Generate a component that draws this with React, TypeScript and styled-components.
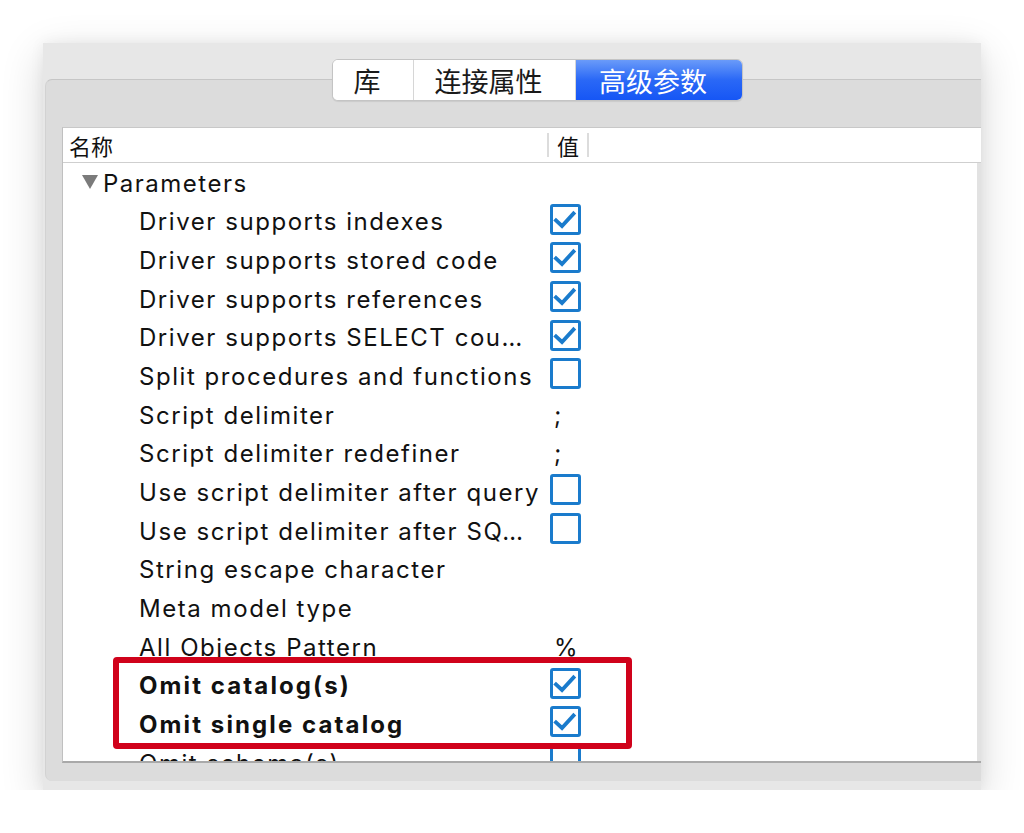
import React from "react";
import styled, { createGlobalStyle } from "styled-components";

type Param = {
  name: string;
  value?: string;
  checked?: boolean;
  bold?: boolean;
};

const params: Param[] = [
  { name: "Driver supports indexes", checked: true },
  { name: "Driver supports stored code", checked: true },
  { name: "Driver supports references", checked: true },
  { name: "Driver supports SELECT cou…", checked: true },
  { name: "Split procedures and functions", checked: false },
  { name: "Script delimiter", value: ";" },
  { name: "Script delimiter redefiner", value: ";" },
  { name: "Use script delimiter after query", checked: false },
  { name: "Use script delimiter after SQ…", checked: false },
  { name: "String escape character", value: "" },
  { name: "Meta model type", value: "" },
  { name: "All Objects Pattern", value: "%" },
];

const highlighted: Param[] = [
  { name: "Omit catalog(s)", checked: true, bold: true },
  { name: "Omit single catalog", checked: true, bold: true },
];

const trailing: Param[] = [{ name: "Omit schema(s)", checked: false }];

const tabs = [
  { label: "库", width: 80 },
  { label: "连接属性", width: 162 },
  { label: "高级参数", width: 167 },
];

const GlobalStyle = createGlobalStyle`
  html, body {
    margin: 0;
    padding: 0;
    background: #ffffff;
    overflow: hidden;
  }
  body {
    font-family: "Inter", "Noto Sans CJK SC", sans-serif;
    color: #111111;
  }
`;

const CheckBox = ({ checked }: { checked: boolean }) => (
  <Box>
    {checked && (
      <svg width="25" height="25" viewBox="0 0 25 25">
        <path
          d="M3 13.5 L9 19 L20.5 6.5"
          fill="none"
          stroke="#1a7bcc"
          strokeWidth="3.8"
          strokeLinecap="square"
          strokeLinejoin="miter"
        />
      </svg>
    )}
  </Box>
);

const ParamRow = ({ name, value, checked, bold }: Param) => (
  <Row>
    <NameCell bold={bold}>{name}</NameCell>
    <ValueCell>
      {checked !== undefined ? (
        <CheckBox checked={checked} />
      ) : (
        <ValueText>{value}</ValueText>
      )}
    </ValueCell>
  </Row>
);

const App = () => {
  return (
    <>
      <GlobalStyle />
      <Window>
        <TabBar>
          <Segmented>
            {tabs.map(({ label, width }, i) => (
              <Segment key={label} active={i === 2} style={{ width }}>
                {label}
              </Segment>
            ))}
          </Segmented>
        </TabBar>
        <Pane>
          <Table>
            <Header>
              <HeaderName>名称</HeaderName>
              <HeaderValue>
                <Divider />
                <HeaderLabel>值</HeaderLabel>
                <Divider />
              </HeaderValue>
            </Header>
            <Body>
              <GroupRow>
                <Triangle />
                Parameters
              </GroupRow>
              {params.map((p) => (
                <ParamRow key={p.name} {...p} />
              ))}
              <Highlight>
                {highlighted.map((p) => (
                  <ParamRow key={p.name} {...p} />
                ))}
                <RedFrame />
              </Highlight>
              {trailing.map((p) => (
                <ParamRow key={p.name} {...p} />
              ))}
            </Body>
          </Table>
        </Pane>
      </Window>
    </>
  );
};

const Window = styled.div`
  margin: 43px 0 0 43px;
  width: 938px;
  height: 747px;
  background: #e7e7e7;
  display: flex;
  flex-direction: column;
  box-shadow: 0 12px 40px rgba(0, 0, 0, 0.16), 0 0 14px rgba(0, 0, 0, 0.06);
`;

const TabBar = styled.div`
  display: flex;
  padding: 16px 0 0 289px;
  position: relative;
  z-index: 1;
`;

const Segmented = styled.div`
  display: flex;
  height: 42px;
  box-sizing: border-box;
  border: 1px solid #c4c4c4;
  border-radius: 6px;
  background: #ffffff;
  box-shadow: 0 1px 1px rgba(0, 0, 0, 0.08);
  overflow: hidden;
`;

const Segment = styled.div<{ active: boolean }>`
  display: flex;
  align-items: center;
  justify-content: center;
  box-sizing: border-box;
  padding-right: 12px;
  font-family: "Noto Sans CJK SC", sans-serif;
  font-size: 27px;
  color: ${({ active }) => (active ? "#ffffff" : "#1a1a1a")};
  background: ${({ active }) =>
    active ? "linear-gradient(180deg, #6a9bf9 0%, #2a68f6 50%, #1656f5 100%)" : "#ffffff"};
  & + & {
    border-left: 1px solid #d6d6d6;
  }
`;

const Pane = styled.div`
  margin: -22px 0 0 2px;
  height: 702px;
  box-sizing: border-box;
  background: #dcdcdc;
  border-top: 1px solid #c6c6c6;
  border-left: 1px solid #d2d2d2;
  border-radius: 7px 0 0 7px;
  padding: 47px 0 18px 16px;
  display: flex;
  flex-direction: column;
`;

const Table = styled.div`
  flex: 1;
  display: flex;
  flex-direction: column;
  background: #ffffff;
  border-top: 1px solid #c8c8c8;
  border-left: 1px solid #c0c0c0;
  border-bottom: 2px solid #a9a9a9;
  min-height: 0;
`;

const Header = styled.div`
  display: grid;
  grid-template-columns: 484px 1fr;
  height: 34px;
  border-bottom: 1px solid #cfcfcf;
  font-family: "Noto Sans CJK SC", sans-serif;
  font-size: 22px;
  color: #111111;
`;

const HeaderName = styled.div`
  display: flex;
  align-items: center;
  padding-left: 6px;
`;

const HeaderValue = styled.div`
  display: flex;
  align-items: center;
  gap: 8px;
`;

const Divider = styled.span`
  width: 2px;
  height: 24px;
  background: #dcdcdc;
`;

const HeaderLabel = styled.span`
  line-height: 1;
`;

const Body = styled.div`
  flex: 1;
  min-height: 0;
  overflow: hidden;
  padding-top: 1px;
  border-right: 4px solid #e2e2e2;
`;

const GroupRow = styled.div`
  display: flex;
  align-items: center;
  height: 38.67px;
  padding-left: 19px;
  font-size: 24px;
  letter-spacing: 1.5px;
  color: #111111;
`;

const Triangle = styled.span`
  width: 0;
  height: 0;
  border-left: 8.5px solid transparent;
  border-right: 8.5px solid transparent;
  border-top: 14px solid #7b7b7b;
  margin: 0 5px 2px 0;
`;

const Row = styled.div`
  display: grid;
  grid-template-columns: 484px 1fr;
  height: 38.67px;
`;

const NameCell = styled.div<{ bold?: boolean }>`
  display: flex;
  align-items: center;
  padding-left: 76px;
  font-size: 24px;
  letter-spacing: ${({ bold }) => (bold ? "2.1px" : "1.55px")};
  font-weight: ${({ bold }) => (bold ? 700 : 400)};
  color: #111111;
  white-space: nowrap;
`;

const ValueCell = styled.div`
  display: flex;
  align-items: center;
  padding-left: 3px;
`;

const ValueText = styled.span`
  padding-left: 4px;
  font-size: 24px;
  color: #111111;
`;

const Box = styled.span`
  display: flex;
  align-items: center;
  justify-content: center;
  align-self: flex-start;
  margin-top: 1px;
  width: 31px;
  height: 31px;
  box-sizing: border-box;
  border: 3px solid #1a7bcc;
  border-radius: 3px;
  background: #ffffff;
`;

const Highlight = styled.div`
  position: relative;
`;

const RedFrame = styled.div`
  position: absolute;
  top: -10px;
  bottom: -5px;
  left: 50px;
  width: 519px;
  box-sizing: border-box;
  border: 6px solid #d0021b;
  border-radius: 4px;
  pointer-events: none;
`;

export default App;
